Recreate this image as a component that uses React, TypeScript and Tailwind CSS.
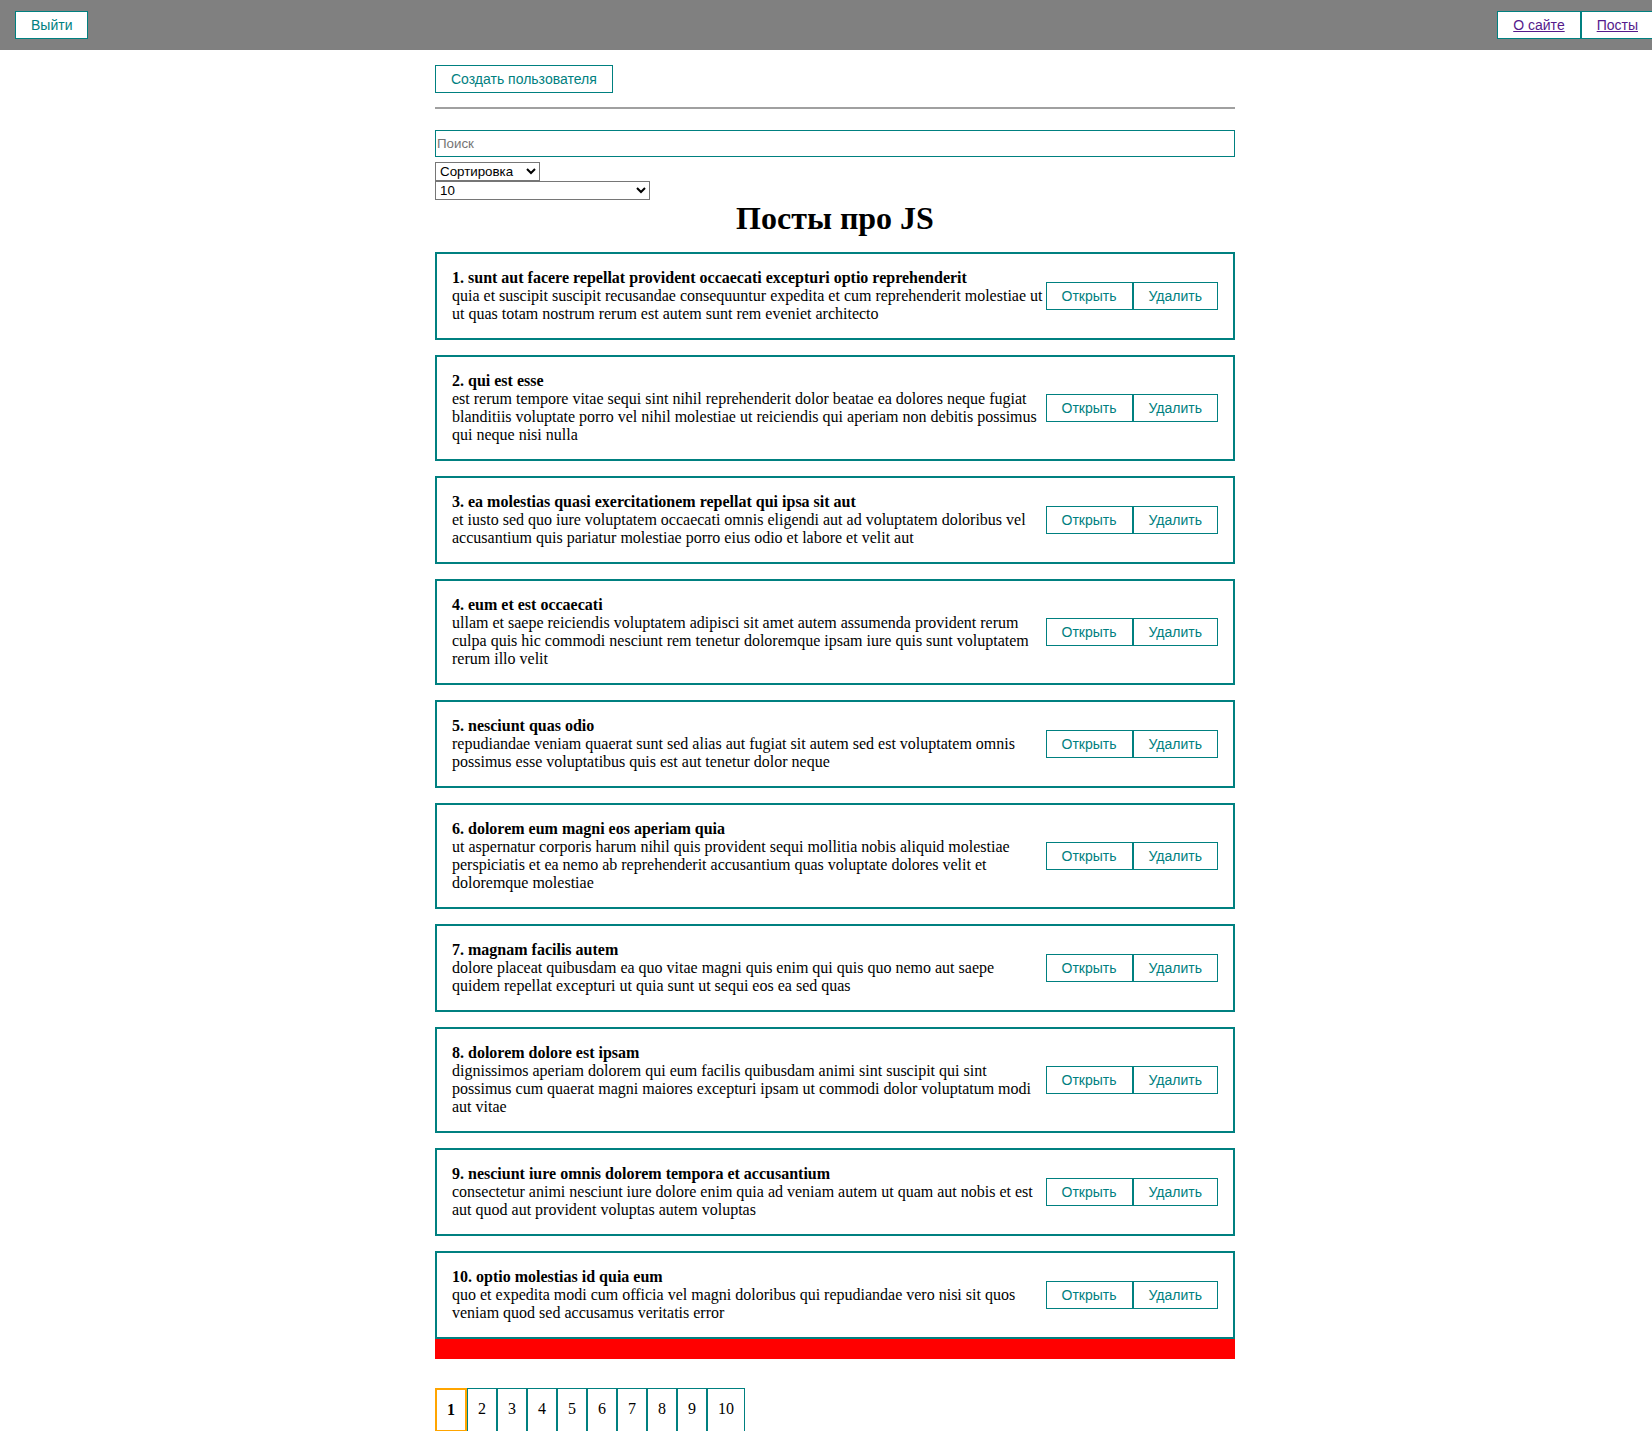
import { useState } from "react";

type Post = { id: number; title: string; body: string };

const posts: Post[] = [
  {
    id: 1,
    title: "sunt aut facere repellat provident occaecati excepturi optio reprehenderit",
    body: "quia et suscipit suscipit recusandae consequuntur expedita et cum reprehenderit molestiae ut ut quas totam nostrum rerum est autem sunt rem eveniet architecto",
  },
  {
    id: 2,
    title: "qui est esse",
    body: "est rerum tempore vitae sequi sint nihil reprehenderit dolor beatae ea dolores neque fugiat blanditiis voluptate porro vel nihil molestiae ut reiciendis qui aperiam non debitis possimus qui neque nisi nulla",
  },
  {
    id: 3,
    title: "ea molestias quasi exercitationem repellat qui ipsa sit aut",
    body: "et iusto sed quo iure voluptatem occaecati omnis eligendi aut ad voluptatem doloribus vel accusantium quis pariatur molestiae porro eius odio et labore et velit aut",
  },
  {
    id: 4,
    title: "eum et est occaecati",
    body: "ullam et saepe reiciendis voluptatem adipisci sit amet autem assumenda provident rerum culpa quis hic commodi nesciunt rem tenetur doloremque ipsam iure quis sunt voluptatem rerum illo velit",
  },
  {
    id: 5,
    title: "nesciunt quas odio",
    body: "repudiandae veniam quaerat sunt sed alias aut fugiat sit autem sed est voluptatem omnis possimus esse voluptatibus quis est aut tenetur dolor neque",
  },
  {
    id: 6,
    title: "dolorem eum magni eos aperiam quia",
    body: "ut aspernatur corporis harum nihil quis provident sequi mollitia nobis aliquid molestiae perspiciatis et ea nemo ab reprehenderit accusantium quas voluptate dolores velit et doloremque molestiae",
  },
  {
    id: 7,
    title: "magnam facilis autem",
    body: "dolore placeat quibusdam ea quo vitae magni quis enim qui quis quo nemo aut saepe quidem repellat excepturi ut quia sunt ut sequi eos ea sed quas",
  },
  {
    id: 8,
    title: "dolorem dolore est ipsam",
    body: "dignissimos aperiam dolorem qui eum facilis quibusdam animi sint suscipit qui sint possimus cum quaerat magni maiores excepturi ipsam ut commodi dolor voluptatum modi aut vitae",
  },
  {
    id: 9,
    title: "nesciunt iure omnis dolorem tempora et accusantium",
    body: "consectetur animi nesciunt iure dolore enim quia ad veniam autem ut quam aut nobis et est aut quod aut provident voluptas autem voluptas",
  },
  {
    id: 10,
    title: "optio molestias id quia eum",
    body: "quo et expedita modi cum officia vel magni doloribus qui repudiandae vero nisi sit quos veniam quod sed accusamus veritatis error",
  },
];

const btn =
  "px-[15px] py-[5px] border border-[#008080] bg-white text-[#008080] text-[14px] leading-[16px] font-['Liberation_Sans',Arial,sans-serif] cursor-pointer";

const navLink =
  "border border-[#008080] bg-white px-[15px] py-[5px] text-[14px] leading-[16px] font-['Liberation_Sans',Arial,sans-serif]";

export default function App() {
  const [page, setPage] = useState(1);
  const [query, setQuery] = useState("");

  return (
    <div className="min-h-[1431px] bg-white text-black text-[16px] font-['Liberation_Serif','Times_New_Roman',serif]">
      {/* navbar */}
      <div className="h-[50px] bg-[#808080] flex items-center justify-between pl-[15px] overflow-hidden">
        <button className={btn}>Выйти</button>
        <div className="flex -mr-[2px]">
          <div className={navLink}>
            <a href="#" className="underline text-[#551a8b]">
              О сайте
            </a>
          </div>
          <div className={navLink}>
            <a href="#" className="underline text-[#551a8b]">
              Посты
            </a>
          </div>
        </div>
      </div>

      <div className="flex justify-center pl-[18px]">
        <div className="w-[800px] mt-[15px]">
          <button className={btn}>Создать пользователя</button>
          <hr className="mt-[14px] mb-[21px] border-0 border-t-2 border-[#a0a0a0]" />

          <input
            value={query}
            onChange={(e) => setQuery(e.target.value)}
            placeholder="Поиск"
            className="block w-full h-[27px] border border-[#008080] px-[1px] text-[13.33px] font-['Liberation_Sans',Arial,sans-serif] placeholder:text-[#757575] outline-none"
          />
          <select className="block mt-[5px] w-[105px] h-[19px] border border-[#767676] bg-white text-[13.33px] font-['Liberation_Sans',Arial,sans-serif] text-black">
            <option>Сортировка</option>
            <option>По названию</option>
            <option>По описанию</option>
          </select>
          <select className="block w-[215px] h-[19px] border border-[#767676] bg-white text-[13.33px] font-['Liberation_Sans',Arial,sans-serif] text-black">
            <option>10</option>
            <option>25</option>
            <option>-1</option>
          </select>

          <h1 className="text-center text-[32px] font-bold leading-[37px]">Посты про JS</h1>

          {posts.map((p) => (
            <div
              key={p.id}
              className="mt-[15px] flex items-center border-2 border-[#008080] p-[15px]"
            >
              <div className="flex-1 leading-[18px]">
                <strong>
                  {p.id}. {p.title}
                </strong>
                <div>{p.body}</div>
              </div>
              <div className="flex">
                <button className={btn}>Открыть</button>
                <button className={btn}>Удалить</button>
              </div>
            </div>
          ))}
          <div className="h-[20px] bg-[#ff0000]" />

          <div className="mt-[29px] flex">
            {[1, 2, 3, 4, 5, 6, 7, 8, 9, 10].map((n) => (
              <span
                key={n}
                onClick={() => setPage(n)}
                className={
                  n === page
                    ? "p-[10px] border-2 border-[#ffa500] leading-[20px] font-bold cursor-pointer"
                    : "p-[10px] border border-[#008080] leading-[20px] cursor-pointer"
                }
              >
                {n}
              </span>
            ))}
          </div>
        </div>
      </div>
    </div>
  );
}
